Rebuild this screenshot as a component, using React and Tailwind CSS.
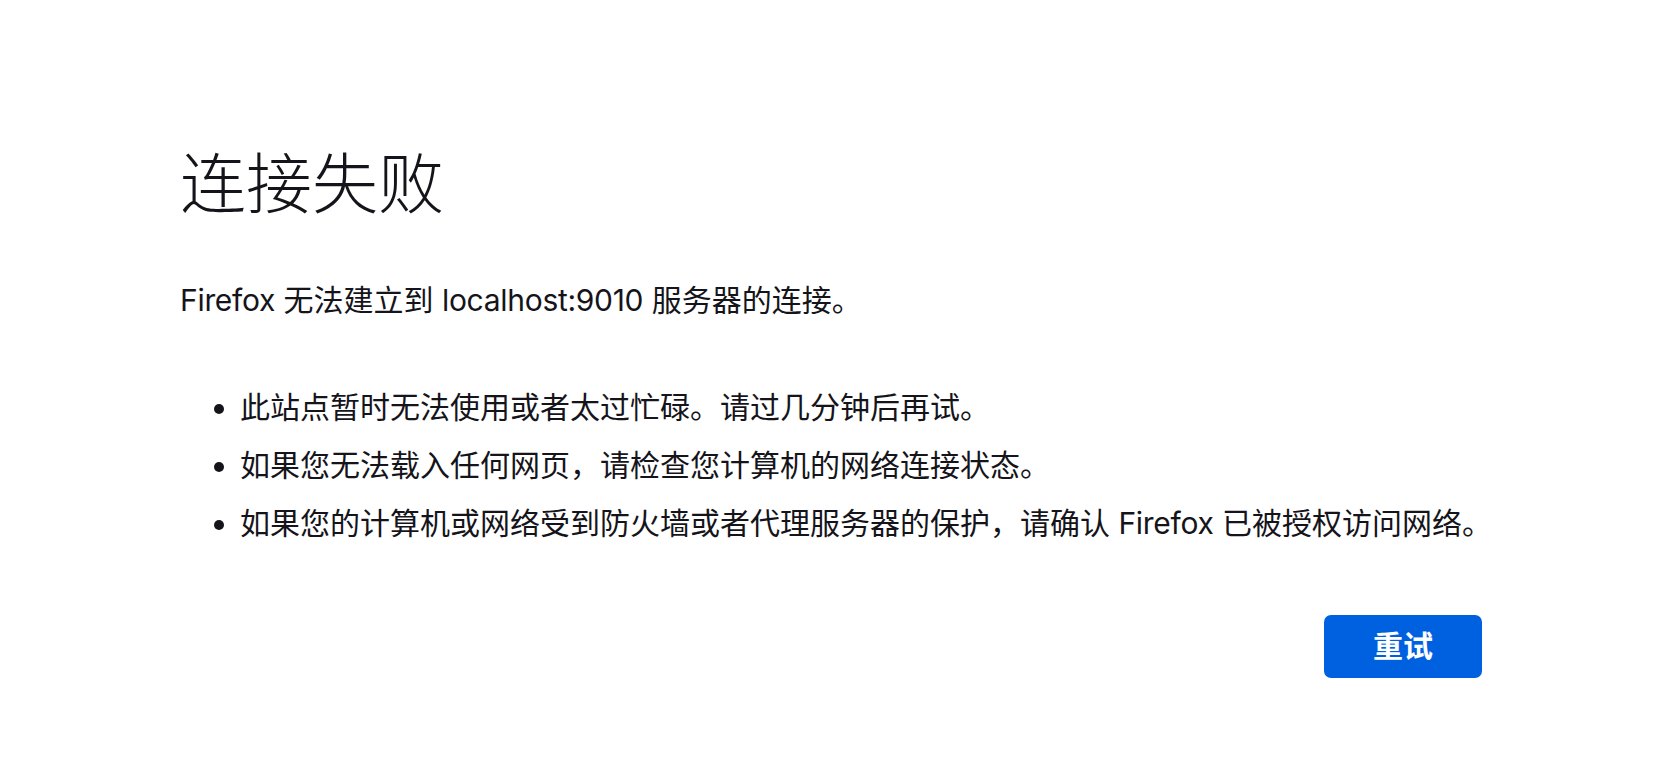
// Latin runs set slightly tighter so they sit like the system font does
function L({ children }) {
  return <span className="tracking-[-0.01em]">{children}</span>
}

export default function App() {
  return (
    <div className="min-h-screen bg-white text-[#15141a] font-['Inter','Noto_Sans_CJK_SC',sans-serif] pl-[180px] pt-[146px]">
      <div className="w-[1302px] flex flex-col">
        {/* Title */}
        <h1 className="text-[66px] leading-[66px] font-light font-['Noto_Sans_CJK_SC',sans-serif]">
          连接失败
        </h1>

        <p className="mt-[66px] text-[30px] leading-[44px]">
          <L>Firefox</L> 无法建立到 <L>localhost:9010</L> 服务器的连接。
        </p>

        <ul className="mt-[63px] pl-[60px] list-disc text-[30px] leading-[44px] flex flex-col gap-[14px] whitespace-nowrap">
          <li>此站点暂时无法使用或者太过忙碌。请过几分钟后再试。</li>
          <li>如果您无法载入任何网页，请检查您计算机的网络连接状态。</li>
          <li>如果您的计算机或网络受到防火墙或者代理服务器的保护，请确认 <L>Firefox</L> 已被授权访问网络。</li>
        </ul>

        <div className="mt-[70px] flex justify-end">
          <button className="w-[158px] h-[63px] rounded-[7px] bg-[#0061e0] text-white text-[30px] font-bold flex items-center justify-center">
            重试
          </button>
        </div>
      </div>
    </div>
  )
}
